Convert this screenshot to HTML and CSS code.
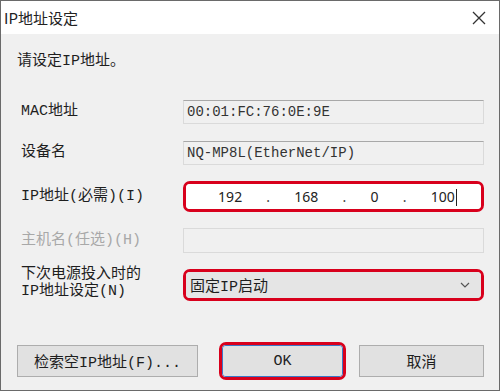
FILE: index.html
```html
<!DOCTYPE html>
<html lang="zh-CN">
<head>
    <meta charset="UTF-8">
    <meta name="viewport" content="width=device-width, initial-scale=1.0">
    <title>IP地址设定</title>
    <link rel="stylesheet" href="styles.css">
</head>
<body>
    <div class="dialog">
        <div class="titlebar">
            <span class="title">IP地址设定</span>
            <span class="close">
                <svg width="14" height="14" viewBox="0 0 14 14"><path d="M1 1 L13 13 M13 1 L1 13" stroke="#333" stroke-width="1.3" fill="none"/></svg>
            </span>
        </div>

        <div class="content">
            <p class="prompt">请设定IP地址。</p>

            <div class="form">
                <label class="label">MAC地址</label>
                <div class="field readonly">00:01:FC:76:0E:9E</div>

                <label class="label">设备名</label>
                <div class="field readonly">NQ-MP8L(EtherNet/IP)</div>

                <label class="label">IP地址(必需)(I)</label>
                <div class="highlight">
                    <div class="ip-field">
                        <span class="octet">192</span>
                        <span class="dot">.</span>
                        <span class="octet">168</span>
                        <span class="dot">.</span>
                        <span class="octet">0</span>
                        <span class="dot">.</span>
                        <span class="octet">100<span class="caret"></span></span>
                    </div>
                </div>

                <label class="label disabled">主机名(任选)(H)</label>
                <div class="field empty"></div>

                <label class="label two-line">下次电源投入时的<br>IP地址设定(N)</label>
                <div class="highlight">
                    <div class="select">
                        <span>固定IP启动</span>
                        <svg width="10" height="6" viewBox="0 0 10 6"><path d="M1 1 L5 5 L9 1" stroke="#555" stroke-width="1.2" fill="none"/></svg>
                    </div>
                </div>
            </div>

            <div class="buttons">
                <button class="btn btn-search">检索空IP地址(F)...</button>
                <div class="highlight btn-wrap">
                    <button class="btn btn-ok">OK</button>
                </div>
                <button class="btn btn-cancel">取消</button>
            </div>
        </div>
    </div>
</body>
</html>
```

FILE: styles.css
```css
body {
    margin: 0;
    background-color: #ffffff;
    font-family: "Liberation Mono", "Noto Sans CJK SC", monospace;
    color: #1e1e1e;
}

.dialog {
    width: 500px;
    height: 391px;
    box-sizing: border-box;
    border: 1px solid #6a6a6a;
    background-color: #f0f0f0;
}

.titlebar {
    height: 33px;
    background-color: #ffffff;
    display: flex;
    align-items: center;
    justify-content: space-between;
    padding: 0 13px 0 3px;
}

.title {
    font-family: "Noto Sans CJK SC", sans-serif;
    font-size: 15px;
    color: #222;
}

.close {
    display: flex;
}

.content {
    padding: 17px 15px 0 16px;
}

.prompt {
    margin: 0;
    font-size: 15px;
    line-height: 22px;
}

.form {
    display: grid;
    grid-template-columns: 166px 1fr;
    grid-template-rows: 24px 25px 31px 25px 32px;
    row-gap: 16px;
    align-items: center;
    margin-top: 27px;
}

.label {
    font-size: 15px;
    padding-left: 4px;
    line-height: 20px;
}

.label.disabled {
    color: #a8a8a8;
}

.label.two-line {
    line-height: 17px;
    margin-top: -4px;
}

.field {
    height: 24px;
    box-sizing: border-box;
    border: 1px solid #dadada;
    border-top-color: #a8a8a8;
    padding: 0 3px;
    font-size: 14px;
    line-height: 22px;
    color: #333;
    white-space: nowrap;
}

.field.empty {
    height: 25px;
    border-top-color: #dadada;
}

.highlight {
    border: 3px solid #d8001c;
    border-radius: 7px;
    overflow: hidden;
}

.ip-field {
    height: 25px;
    background-color: #ffffff;
    display: flex;
    align-items: center;
    justify-content: space-around;
    padding: 0 12px 0 20px;
    font-family: "Noto Sans", sans-serif;
    font-size: 14px;
    color: #222;
}

.dot {
    color: #444;
}

.caret {
    display: inline-block;
    width: 1px;
    height: 17px;
    background-color: #222;
    vertical-align: middle;
    margin-left: 1px;
}

.select {
    height: 26px;
    background-color: #e5e5e5;
    display: flex;
    align-items: center;
    justify-content: space-between;
    padding: 0 11px 0 4px;
    font-size: 15px;
}

.buttons {
    display: flex;
    align-items: center;
    margin-top: 41px;
}

.btn {
    height: 32px;
    box-sizing: border-box;
    background-color: #e1e1e1;
    border: 1px solid #adadad;
    font-family: "Liberation Mono", "Noto Sans CJK SC", monospace;
    font-size: 15px;
    color: #1e1e1e;
    padding: 0;
}

.btn-search {
    width: 181px;
}

.btn-wrap {
    width: 127px;
    box-sizing: border-box;
    margin-left: 21px;
}

.btn-ok {
    width: 100%;
    display: block;
    border-color: #3a78c8;
    border-radius: 3px;
}

.btn-cancel {
    width: 125px;
    margin-left: 13px;
}
```
